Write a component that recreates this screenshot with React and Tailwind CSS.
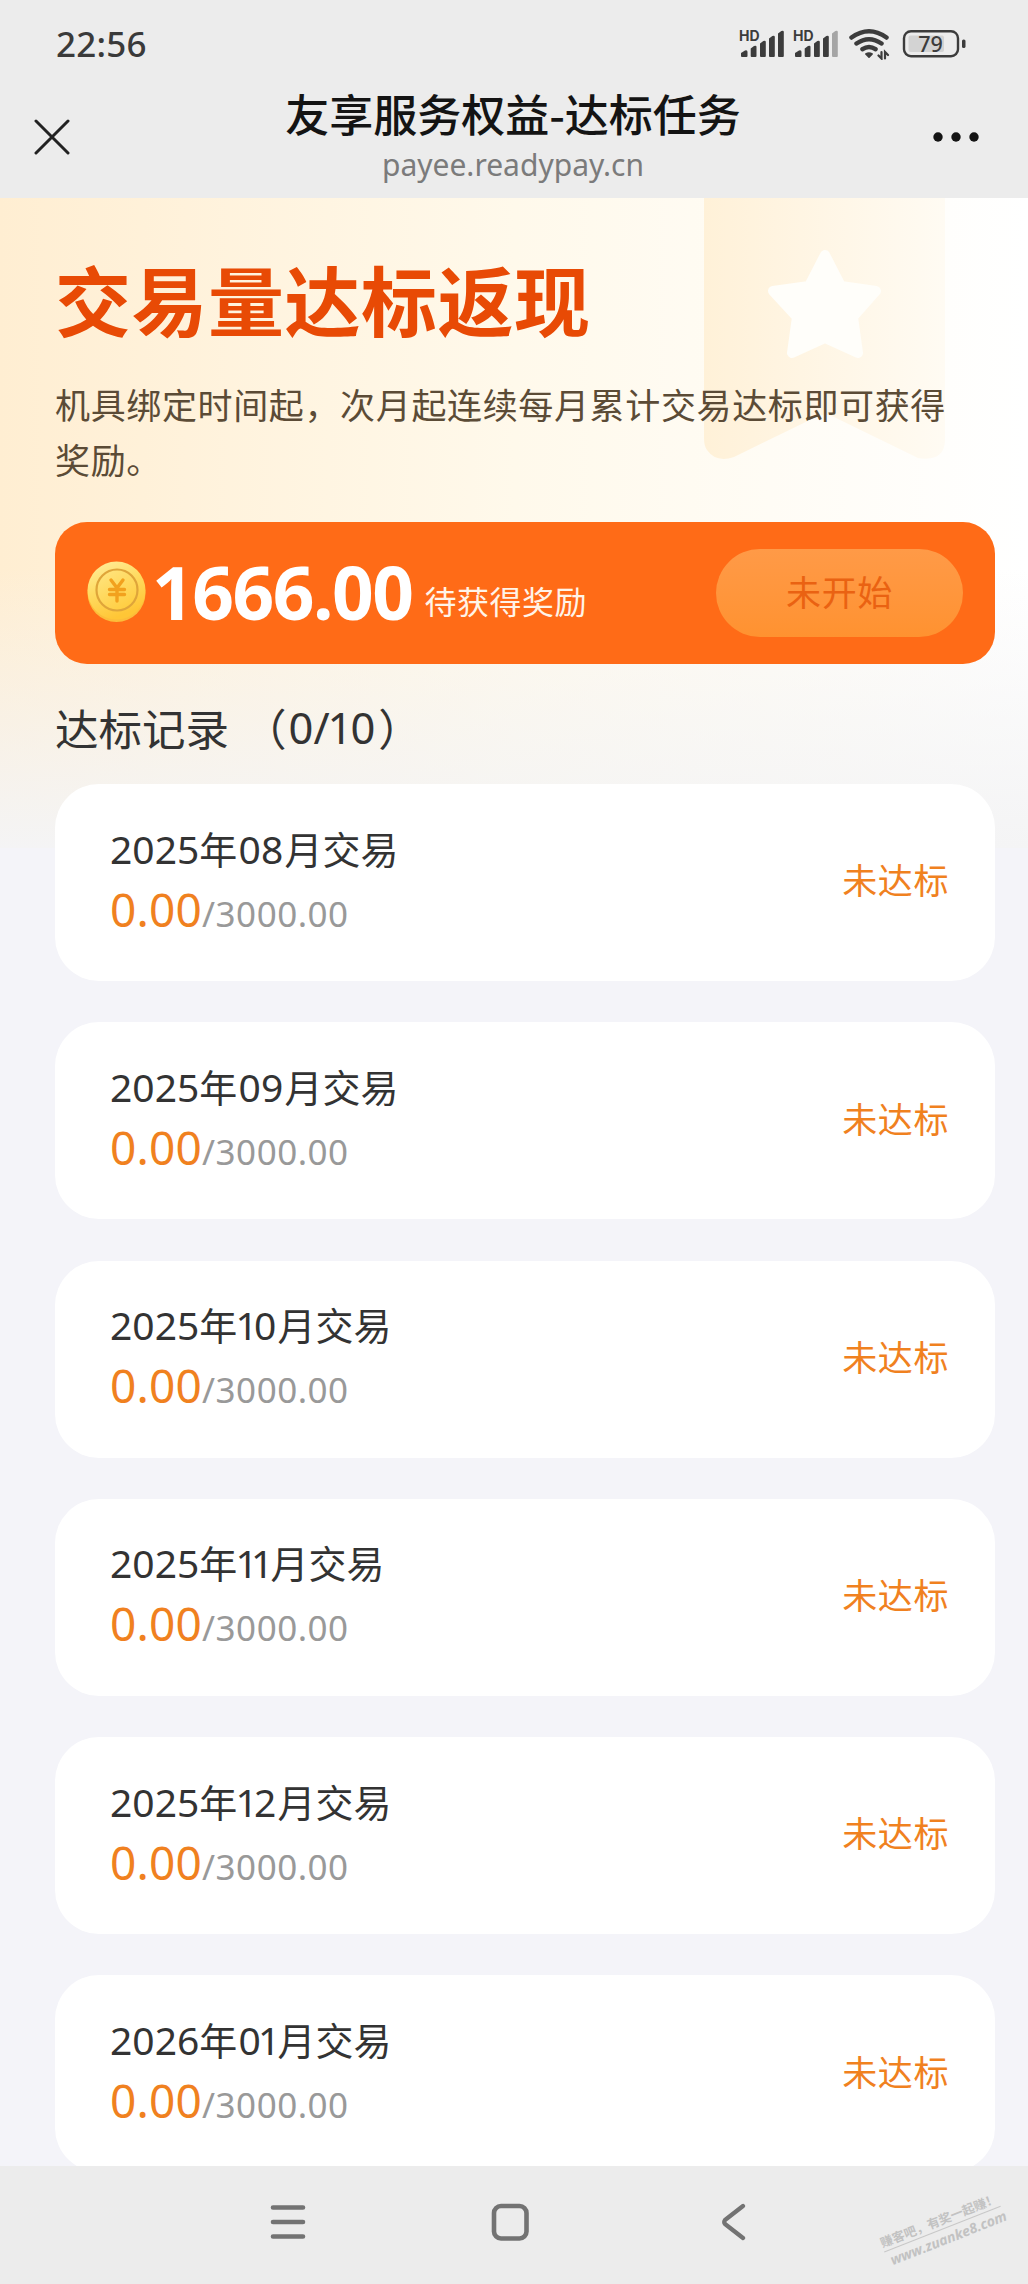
import React from "react";

const records = [
  ["2025", "08"],
  ["2025", "09"],
  ["2025", "10"],
  ["2025", "11"],
  ["2025", "12"],
  ["2026", "01"],
];

function Signal({ weak }) {
  return (
    <svg className="overflow-visible" width="46" height="32" viewBox="0 0 46 32" fill="#3c3c3c">
      <text x="0" y="12.500" fontSize="14" fontWeight="700" fontFamily="Inter, sans-serif">HD</text>
      <path d="M2 28v-3l4-2.500q2.500-.8 2.500 1.500v4q0 1-1 1h-4.500q-1 0-1-1z" />
      <path d="M11.700 28v-7.500l3.300-2.500q2.500-1 2.500 1v9q0 1-1 1h-3.800q-1 0-1-1z" />
      <path d="M21 28v-12.500l3.300-2.500q2.500-1 2.500 1v14q0 1-1 1h-3.800q-1 0-1-1z" />
      <path d="M30 28v-17.500l3.300-2.500q2.500-1 2.500 1v19q0 1-1 1h-3.800q-1 0-1-1z" />
      <path d="M39 28v-22.500l3.300-2.500q2.500-1 2.500 1v24q0 1-1 1h-3.800q-1 0-1-1z" opacity={weak ? 0.4 : 1} />
    </svg>
  );
}

function StatusBar() {
  return (
    <div className="flex h-[88px] items-center justify-between pl-[56px] pr-[62px]">
      <span className="-mt-[2px] font-['Noto_Sans',sans-serif] text-[35px] font-medium leading-none tracking-[0.200px] text-[#3a3a3a]">22:56</span>
      <div className="-mt-px flex items-center">
        <Signal />
        <span className="w-2" />
        <Signal weak />
        <span className="w-[9px]" />
        <svg width="42" height="32" viewBox="0 0 42 32" fill="none" stroke="#3c3c3c" strokeWidth="4.500" strokeLinecap="round">
          <path d="M3.500 9.500q17.500-12.500 35 0M8.500 15.500q12.500-8.500 25 0M14.500 21.200q6.500-4.500 13 0" />
          <path d="M17.800 26q3.200-1.800 6.400 0l-3.200 3.300z" fill="#3c3c3c" strokeWidth="1.500" strokeLinejoin="round" />
          <path d="M33.500 24v6.500l-3-3M37 30.500v-6.500l3 3" strokeWidth="2.200" />
        </svg>
        <span className="w-3" />
        <svg width="64" height="30" viewBox="0 0 64 30">
          <rect x="2" y="2.200" width="54" height="25" rx="7" fill="none" stroke="#3c3c3c" strokeWidth="2.400" />
          <rect x="6.500" y="6.500" width="35.500" height="16.500" rx="2" fill="#d3d3d3" />
          <rect x="60" y="10.500" width="3.500" height="8.500" rx="1.600" fill="#3c3c3c" />
          <text x="28.500" y="22.500" textAnchor="middle" fontSize="21.500" fontWeight="500" fill="#3c3c3c" fontFamily="'Noto Sans', sans-serif">79</text>
        </svg>
      </div>
    </div>
  );
}

function TitleBar() {
  return (
    <div className="grid h-[110px] grid-cols-[1fr_auto_1fr] items-center pl-[34px] pr-[36px]">
      <svg className="-mt-[12px]" width="36" height="36" viewBox="0 0 36 36" stroke="#222" strokeWidth="3" strokeLinecap="round">
        <path d="M2 2l32 32M34 2L2 34" />
      </svg>
      <div className="-mt-[15px] flex flex-col items-center">
        <h1 className="text-[44px] font-medium leading-[54px] text-[#141414]">友享服务权益-达标任务</h1>
        <p className="mt-[4px] font-['Noto_Sans',sans-serif] text-[30px] leading-[42px] text-[#7b7b7b]">payee.readypay.cn</p>
      </div>
      <svg className="-mt-[12px] mr-[12px] justify-self-end" width="48" height="12" viewBox="0 0 48 12" fill="#141414">
        <circle cx="6" cy="6" r="4.700" /><circle cx="24" cy="6" r="4.700" /><circle cx="42" cy="6" r="4.700" />
      </svg>
    </div>
  );
}

function Ribbon() {
  return (
    <svg className="absolute left-[704px] top-0" width="242" height="264" viewBox="0 0 242 264">
      <defs>
        <linearGradient id="ribbon" x1="0" x2="1" y1="0" y2="0">
          <stop offset="0" stopColor="#fff1d8" />
          <stop offset="1" stopColor="#fffbf3" />
        </linearGradient>
      </defs>
      <path fill="url(#ribbon)" d="M0 0H241V243Q240 264 214 260L130 219Q121 214 112 219L30 259Q12 265 3 252Q0 248 0 240Z" />
      <path fill="#fffefa" stroke="#fffefa" strokeWidth="10" strokeLinejoin="round" d="M121 57L137 88L172 93L149 119L154 155L121 140L88 155L93 119L69 93L105 88Z" />
    </svg>
  );
}

function Coin() {
  return (
    <svg className="-mt-[2px]" width="59" height="62" viewBox="0 0 59 62">
      <defs>
        <linearGradient id="rim" x1="0" x2="0.400" y1="0" y2="1">
          <stop offset="0" stopColor="#fff0a0" />
          <stop offset="0.500" stopColor="#ffdb62" />
          <stop offset="1" stopColor="#ffc636" />
        </linearGradient>
        <linearGradient id="face" x1="0" x2="0.600" y1="0" y2="1">
          <stop offset="0" stopColor="#ffe683" />
          <stop offset="1" stopColor="#ffce42" />
        </linearGradient>
      </defs>
      <circle cx="29.500" cy="32" r="29" fill="#fcbd3a" />
      <circle cx="29.500" cy="29.500" r="29" fill="url(#rim)" />
      <circle cx="30" cy="29" r="20.500" fill="url(#face)" stroke="#dfa53a" strokeWidth="2.200" />
      <path d="M24 19l6 8 6-8M30 27v13M22.500 28.500h15M22.500 33.500h15" fill="none" stroke="#f2a11e" strokeWidth="3.400" strokeLinecap="round" />
    </svg>
  );
}

function RewardBar() {
  return (
    <div className="mt-[36px] flex h-[142px] w-[940px] items-center justify-between rounded-[32px] bg-[#ff6b17] pl-[32px] pr-[32px]">
      <div className="flex items-center">
        <Coin />
        <span className="-mt-[4px] ml-[6px] font-['Noto_Sans',sans-serif] text-[73px] font-bold leading-none tracking-[-1.500px] text-white">1666.00</span>
        <span className="ml-[12px] mt-[14px] text-[32px] leading-none tracking-[0.500px] text-[#fff4e8]">待获得奖励</span>
      </div>
      <button className="h-[88px] w-[247px] rounded-full bg-linear-to-b from-[#ff9a47] to-[#ff9230] pb-[3px] text-[35px] tracking-[0.600px] text-[#ea6212]">未开始</button>
    </div>
  );
}

function Digits({ value }) {
  return (
    <span className="font-['Noto_Sans',sans-serif] text-[39px]">
      {value.split("").map((d, i) => (
        <span key={i} className={d === "1" ? "-ml-[3px] -mr-[4px]" : ""}>{d}</span>
      ))}
    </span>
  );
}

function Record({ year, month }) {
  return (
    <div className="flex h-[197px] w-[940px] shrink-0 items-center justify-between rounded-[44px] bg-white pl-[55px] pr-[46px]">
      <div>
        <div className="text-[38px] leading-[56px] text-[#333]">
          <Digits value={year} />年<span className="mx-[1.300px]"><Digits value={month} /></span>月交易
        </div>
        <div className="flex items-baseline font-['Noto_Sans',sans-serif] leading-[64px]">
          <span className="text-[46px] tracking-[0.200px] text-[#f0811f]">0.00</span>
          <span className="text-[35px] tracking-[0.500px] text-[#999]">/3000.00</span>
        </div>
      </div>
      <span className="-mt-[6px] text-[35px] tracking-[0.600px] text-[#f0811f]">未达标</span>
    </div>
  );
}

function NavBar() {
  return (
    <div className="relative h-[118px] bg-[#ececec]">
      <div className="flex h-[112px] items-center pl-[270px]">
        <svg width="36" height="36" viewBox="0 0 36 36" stroke="#737373" strokeWidth="4.600" strokeLinecap="round">
          <path d="M3 3.500h30M3 18h30M3 32.500h30" />
        </svg>
        <svg className="ml-[185px]" width="38" height="38" viewBox="0 0 38 38">
          <rect x="3" y="3" width="32.500" height="32.500" rx="7" fill="none" stroke="#737373" strokeWidth="4.600" />
        </svg>
        <svg className="ml-[191px]" width="26" height="38" viewBox="0 0 26 38" fill="none" stroke="#737373" strokeWidth="4.300" strokeLinecap="round" strokeLinejoin="round">
          <path d="M23 3L5 17Q3.500 19 5 21L23 35" />
        </svg>
      </div>
      <div className="absolute left-[883px] top-[43px] w-[122px] -rotate-[21.500deg] whitespace-nowrap font-bold text-[#c2c2c2]">
        <div className="border-b border-[#c8c8c8] text-[12.500px] leading-[19px] -ml-[3px]">赚客吧，有奖一起赚！</div>
        <div className="font-['Open_Sans',sans-serif] text-[14px] italic leading-[20px]">www.zuanke8.com</div>
      </div>
    </div>
  );
}

export default function App() {
  return (
    <div className="flex h-[2284px] w-[1028px] flex-col overflow-hidden bg-[#f4f4f9] font-['Noto_Sans_CJK_SC',sans-serif]">
      <header className="h-[198px] bg-[#ececec]">
        <StatusBar />
        <TitleBar />
      </header>
      <main className="relative min-h-0 flex-1 overflow-hidden pl-[55px]">
        <div className="absolute left-0 top-0 h-[650px] w-full bg-linear-to-r from-[#ffeed2] via-[#fff9eb] to-white" />
        <div className="absolute left-0 top-[370px] h-[280px] w-full bg-linear-to-b from-[#f4f4f4]/0 to-[#f4f4f5]" />
        <Ribbon />
        <div className="relative">
          <h2 className="pt-[46px] text-[76px] font-bold leading-[108px] tracking-[0.500px] text-[#e84a05]">交易量达标返现</h2>
          <p className="mt-[24px] w-[900px] text-[35px] leading-[55px] tracking-[0.640px] text-[#5b4b36]">机具绑定时间起，次月起连续每月累计交易达标即可获得奖励。</p>
          <RewardBar />
          <div className="flex h-[120px] items-center whitespace-pre pt-[8px] text-[43.500px] text-[#333]">达标记录<span className="ml-[14px]">（</span><span className="ml-[2px] font-['Noto_Sans',sans-serif]">0/<span className="-ml-[2px] -mr-[2px]">1</span>0</span><span className="ml-[3px]">）</span></div>
          <div className="flex flex-col gap-[41.300px]">
            {records.map(([y, m]) => <Record key={y + m} year={y} month={m} />)}
          </div>
        </div>
      </main>
      <NavBar />
    </div>
  );
}
